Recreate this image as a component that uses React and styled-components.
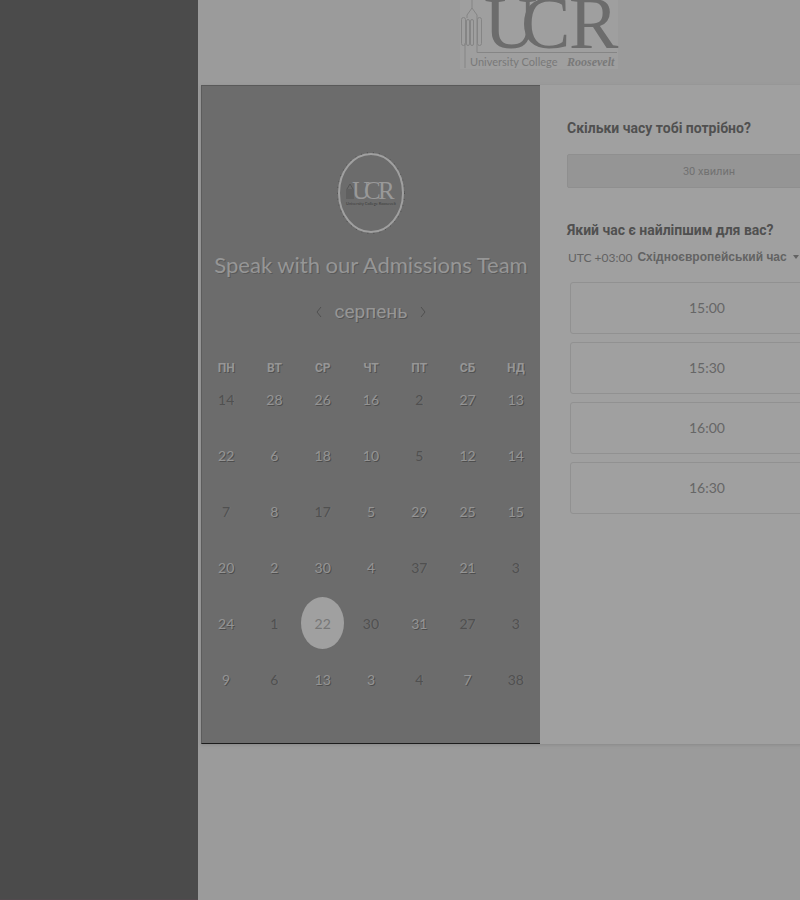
import React from "react";
import styled, { createGlobalStyle } from "styled-components";

const GlobalStyle = createGlobalStyle`
  * { box-sizing: border-box; }
  body {
    margin: 0;
    overflow: hidden;
    background: #9b9b9b;
    color: #555;
    font-family: Roboto, "Liberation Sans", Arial, sans-serif;
  }
  button, select { font: inherit; color: inherit; }
`;

const Page = styled.div`
  display: flex;
  min-height: 100vh;
`;

const Sidebar = styled.aside`
  flex: 0 0 198px;
  background: #4b4b4b;
  border-bottom: 1px solid #524a4e;
`;

const Main = styled.main`
  flex: 1 0 684px;
  padding: 0 3px;
`;

const Header = styled.header`
  display: flex;
  justify-content: center;
  height: 85px;
`;

const LogoArt = styled.svg`
  display: block;
  flex: none;
`;

const Card = styled.div`
  display: grid;
  grid-template-columns: 1fr 1fr;
  min-height: 659px;
  background: #a0a0a0;
  box-shadow: 0 1px 3px #888;
`;

const CalendarPanel = styled.section`
  display: flex;
  flex-direction: column;
  align-items: center;
  padding-top: 66px;
  background: #6c6c6c;
  border-top: 1px solid #595959;
  border-left: 1px solid #5c5c5c;
  border-bottom: 1px solid #1d1d1d;
  color: #969696;
`;

const Title = styled.h1`
  margin: 15px 0 0;
  font: 400 22px/32px Lato, sans-serif;
  white-space: nowrap;
  text-shadow: 1px 1px 0 #5a5a5a;
`;

const MonthNav = styled.div`
  display: flex;
  align-items: center;
  justify-content: center;
  gap: 8px;
  margin-top: 17px;
`;

const MonthName = styled.h2`
  margin: 0;
  font-size: 19px;
  font-weight: 400;
  line-height: 28px;
  text-shadow: 1px 1px 0 #555;
`;

const Arrow = styled.button`
  display: flex;
  padding: 4px;
  border: 0;
  background: none;
  color: #505050;
`;

const Days = styled.table`
  align-self: stretch;
  margin: 39px 0 0;
  table-layout: fixed;
  border-collapse: collapse;
  text-align: center;
  th {
    height: 6px;
    padding: 0;
    font-size: 12px;
    line-height: 6px;
    text-shadow: 1px 1px 0 #525252;
  }
  td {
    height: 56px;
    padding: 0;
  }
`;

const Day = styled.button`
  display: block;
  width: 43px;
  height: 52px;
  margin: 0 auto;
  padding: 0;
  border: 0;
  border-radius: 50%;
  font-family: Lato, sans-serif;
  font-size: 14px;
  background: ${(p) => (p.$selected ? "#a0a0a0" : "none")};
  color: ${(p) => (p.$selected ? "#777" : p.$dim ? "#505050" : "#949494")};
  text-shadow: ${(p) => (p.$selected ? "none" : p.$dim ? "1px 0 0 #747474" : "1px 1px 0 #4e4e4e")};
`;

const BookingPanel = styled.section`
  padding: 33px 28px 0 27px;
`;

const Question = styled.h2`
  margin: 0;
  color: #505050;
  font-size: 14px;
  line-height: 20px;
  white-space: nowrap;
`;

const Duration = styled.button`
  display: block;
  width: 100%;
  height: 34px;
  margin: 16px 0 32px;
  padding: 0;
  border: 1px solid #8f8f8f;
  border-radius: 2px;
  background: #959595;
  color: #717171;
  font-size: 11px;
`;

const ZoneButton = styled.button`
  display: flex;
  align-items: center;
  gap: 5px;
  height: 24px;
  margin-top: 5px;
  padding: 0 1px;
  border: 0;
  background: none;
  color: #636363;
  font-family: "Liberation Sans", Arial, sans-serif;
  font-size: 12px;
  white-space: nowrap;
`;

const Offset = styled.span`
  font-family: Lato, sans-serif;
  font-size: 12px;
`;

const Slots = styled.div`
  display: grid;
  gap: 8px;
  padding: 13px 7px 0 3px;
`;

const Slot = styled.button`
  height: 52px;
  padding: 0 0 2px;
  border: 1px solid #919191;
  border-radius: 3px;
  background: none;
  color: #666;
  font-family: Lato, sans-serif;
  font-size: 14px;
`;

function HeaderLogo() {
  return (
    <LogoArt width="160" height="72" viewBox="460 0 160 72" role="img" aria-label="University College Roosevelt">
      <rect x="460" y="0" width="158" height="69" fill="#9f9f9f" />
      <g fill="none" stroke="#858585" strokeWidth="1">
        <path d="M472 0V8L467 15V18M472 8L477 15V52.500H617M465 43V68" />
        <rect x="461.500" y="17.500" width="4" height="28" rx="2" />
        <rect x="466.500" y="19.500" width="3" height="26" rx="1.500" />
        <rect x="470.500" y="19.500" width="3" height="26" rx="1.500" />
        <rect x="477.500" y="17.500" width="4" height="28" rx="2" />
      </g>
      <g fontFamily="Liberation Serif, serif" fontSize="74" fill="#6c6c6c">
        <text x="484" y="48">U</text>
        <text x="521" y="48">C</text>
        <text x="569" y="48">R</text>
      </g>
      <text x="470" y="66" fontFamily="Lato, sans-serif" fontSize="11" fill="#797979">University College</text>
      <text x="567" y="66" fontFamily="Liberation Serif, serif" fontStyle="italic" fontWeight="700" fontSize="12" fill="#797979">Roosevelt</text>
    </LogoArt>
  );
}

function Badge() {
  return (
    <LogoArt width="68" height="82" viewBox="0 0 68 82" role="img" aria-label="UCR">
      <ellipse cx="34" cy="41" rx="33" ry="40" fill="none" stroke="#505050" strokeWidth="2" strokeDasharray="1 5" />
      <ellipse cx="34" cy="41" rx="32" ry="39" fill="none" stroke="#a0a0a0" strokeWidth="2" />
      <path d="M10 47V37L13 32L16 37V47M12 37V47M14 37V47" fill="none" stroke="#555" />
      <g fontFamily="Liberation Serif, serif" fontSize="25" fill="#999">
        <text x="15" y="47">U</text>
        <text x="27" y="47">C</text>
        <text x="41" y="47">R</text>
      </g>
      <text x="9" y="53" fontFamily="Lato, sans-serif" fontSize="4" fill="#3d3d3d">University College Roosevelt</text>
    </LogoArt>
  );
}

const Chevron = ({ d }) => (
  <svg width="6" height="12" viewBox="0 0 6 12" fill="none" stroke="currentColor" aria-hidden="true">
    <path d={d} />
  </svg>
);

const weekdays = ["ПН", "ВТ", "СР", "ЧТ", "ПТ", "СБ", "НД"];
const weeks = [
  ["14-", "28", "26", "16", "2-", "27", "13"],
  ["22", "6", "18", "10", "5-", "12", "14"],
  ["7-", "8", "17-", "5", "29", "25", "15"],
  ["20", "2", "30", "4", "37-", "21", "3-"],
  ["24", "1-", "22*", "30-", "31", "27-", "3-"],
  ["9", "6-", "13", "3", "4-", "7", "38-"],
];

export default function App() {
  return (
    <>
      <GlobalStyle />
      <Page>
        <Sidebar />
        <Main>
          <Header><HeaderLogo /></Header>
          <Card>
            <CalendarPanel>
              <Badge />
              <Title>Speak with our Admissions Team</Title>
              <MonthNav>
                <Arrow aria-label="Попередній місяць"><Chevron d="M5 1L1 6L5 11" /></Arrow>
                <MonthName>серпень</MonthName>
                <Arrow aria-label="Наступний місяць"><Chevron d="M1 1L5 6L1 11" /></Arrow>
              </MonthNav>
              <Days>
                <thead>
                  <tr>{weekdays.map((d) => <th key={d} scope="col">{d}</th>)}</tr>
                </thead>
                <tbody>
                  {weeks.map((week, w) => (
                    <tr key={w}>
                      {week.map((day, i) => (
                        <td key={i}>
                          <Day $selected={day.endsWith("*")} $dim={day.endsWith("-")}>{parseInt(day, 10)}</Day>
                        </td>
                      ))}
                    </tr>
                  ))}
                </tbody>
              </Days>
            </CalendarPanel>
            <BookingPanel>
              <Question>Скільки часу тобі потрібно?</Question>
              <Duration>30 хвилин</Duration>
              <Question>Який час є найліпшим для вас?</Question>
              <ZoneButton>
                <Offset>UTC +03:00</Offset>
                <strong>Східноєвропейський час</strong>
                <svg width="8" height="4" viewBox="0 0 8 4" aria-hidden="true"><path d="M1 0H7L4 4Z" fill="currentColor" /></svg>
              </ZoneButton>
              <Slots>
                {["15:00", "15:30", "16:00", "16:30"].map((t) => <Slot key={t}>{t}</Slot>)}
              </Slots>
            </BookingPanel>
          </Card>
        </Main>
      </Page>
    </>
  );
}
